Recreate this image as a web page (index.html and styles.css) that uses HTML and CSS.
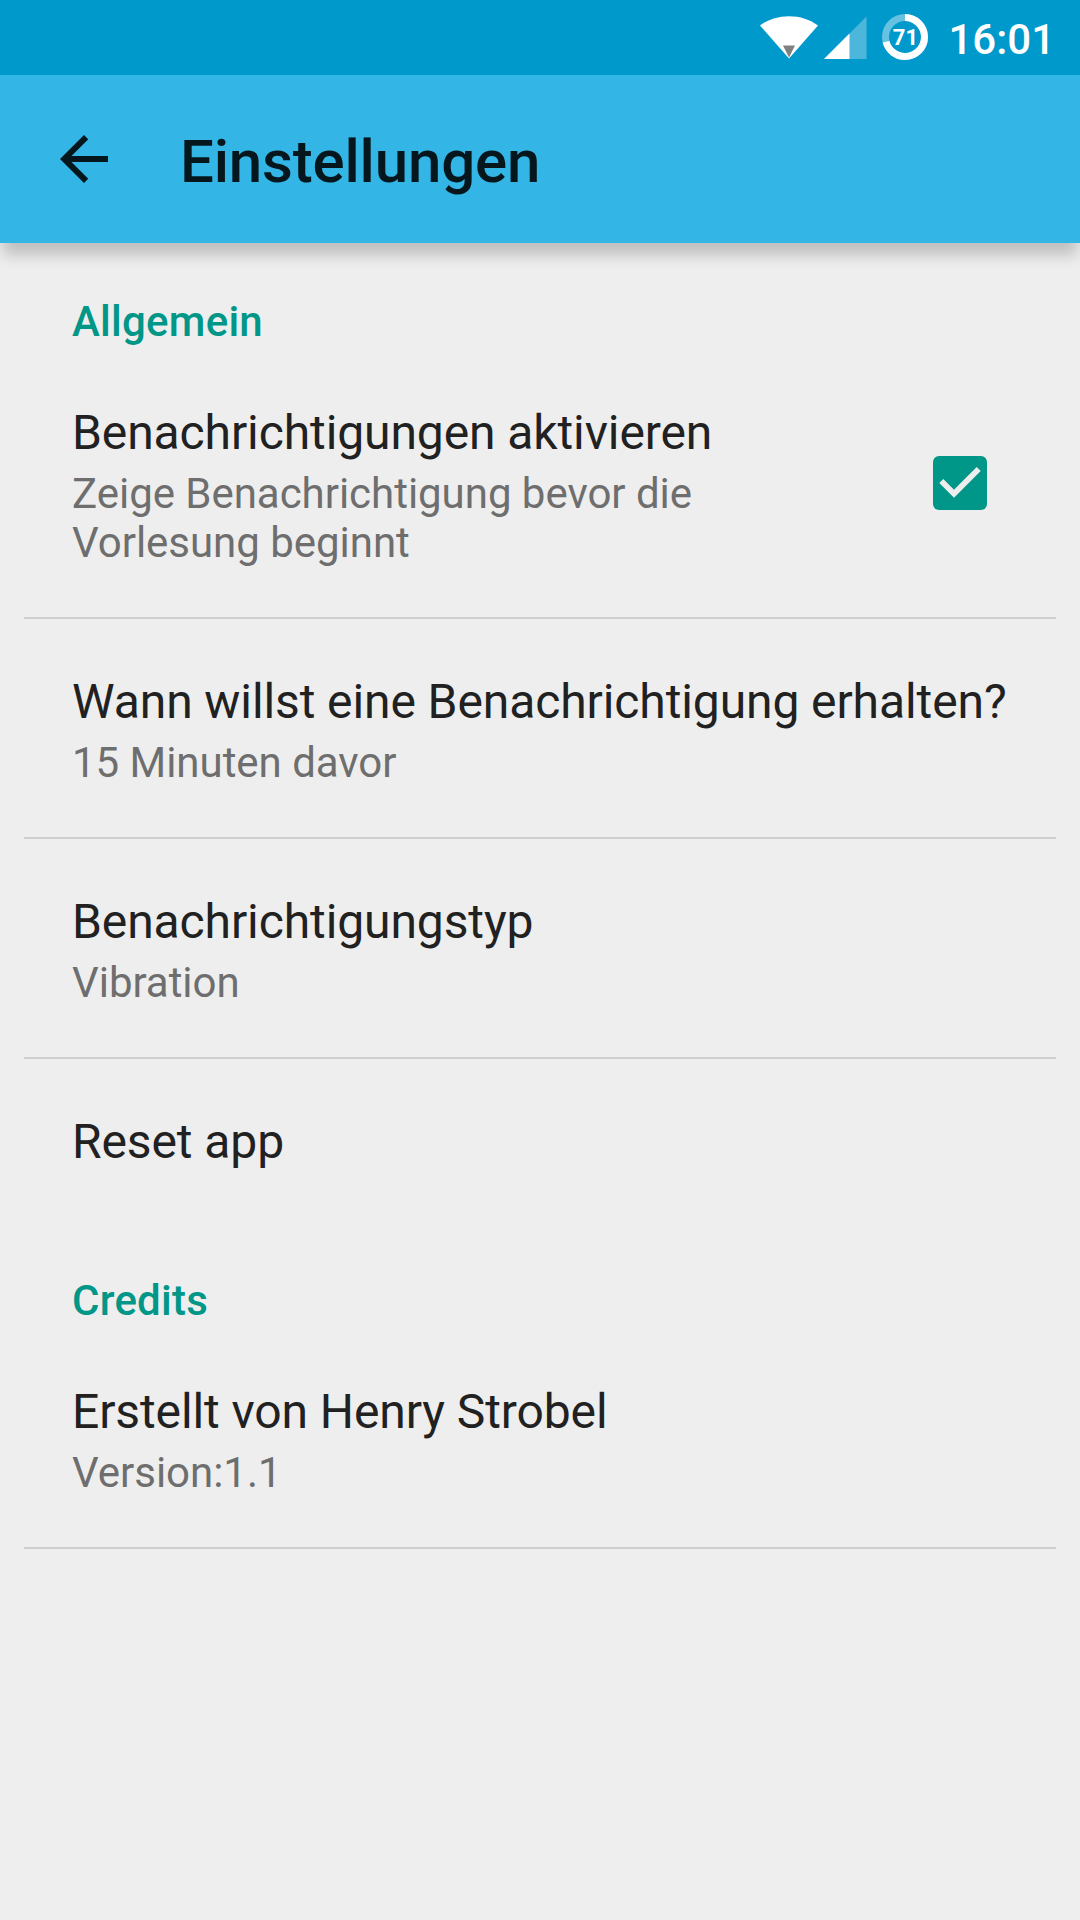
FILE: index.html
```html
<!DOCTYPE html>
<html lang="de">
<head>
<meta charset="utf-8">
<title>Einstellungen</title>
<link rel="stylesheet" href="styles.css">
</head>
<body>
<div class="status-bar">
  <svg class="wifi" width="58" height="43" viewBox="0 0 58 43" aria-hidden="true">
    <path d="M0 9.500C8 3.500 18 .2 29 .2s21 3.300 29 9.300L29 42.500z" fill="#fff"/>
    <path d="M23 29.500h12L29 41.500z" fill="#808080"/>
  </svg>
  <svg class="signal" width="43" height="43" viewBox="0 0 43 43" aria-hidden="true">
    <path d="M0 43L42.500 .5V43z" fill="#fff" fill-opacity=".3"/>
    <path d="M0 43L25.500 17.500V43z" fill="#fff"/>
  </svg>
  <div class="battery">
    <svg width="46" height="46" viewBox="0 0 46 46" aria-hidden="true">
      <circle cx="23" cy="23" r="19.500" fill="none" stroke="#fff" stroke-opacity=".4" stroke-width="7"/>
      <circle cx="23" cy="23" r="19.500" fill="none" stroke="#fff" stroke-width="7" pathLength="100" stroke-dasharray="71 29" transform="rotate(-90 23 23)"/>
    </svg>
    <span class="battery-level">71</span>
  </div>
  <span class="clock">16:01</span>
</div>
<header class="toolbar">
  <svg class="back" width="72" height="72" viewBox="0 0 24 24" aria-hidden="true">
    <path d="M20 11H7.830l5.590-5.590L12 4l-8 8 8 8 1.410-1.410L7.830 13H20v-2z"/>
  </svg>
  <h1 class="title">Einstellungen</h1>
</header>
<main class="settings">
  <h2 class="category">Allgemein</h2>
  <div class="item divided">
    <div class="item-text">
      <div class="item-title">Benachrichtigungen aktivieren</div>
      <div class="item-summary">Zeige Benachrichtigung bevor die Vorlesung beginnt</div>
    </div>
    <svg class="checkbox" width="54" height="54" viewBox="0 0 54 54" role="img" aria-label="Aktiviert">
      <rect width="54" height="54" rx="6" fill="#009688"/>
      <path d="M8.300 25L21 37.700L45.700 13" fill="none" stroke="#eee" stroke-width="5.700"/>
    </svg>
  </div>
  <div class="item divided">
    <div class="item-text">
      <div class="item-title">Wann willst eine Benachrichtigung erhalten?</div>
      <div class="item-summary">15 Minuten davor</div>
    </div>
  </div>
  <div class="item divided">
    <div class="item-text">
      <div class="item-title">Benachrichtigungstyp</div>
      <div class="item-summary">Vibration</div>
    </div>
  </div>
  <div class="item item-single">
    <div class="item-text">
      <div class="item-title">Reset app</div>
    </div>
  </div>
  <h2 class="category">Credits</h2>
  <div class="item divided">
    <div class="item-text">
      <div class="item-title">Erstellt von Henry Strobel</div>
      <div class="item-summary">Version:1.1</div>
    </div>
  </div>
</main>
</body>
</html>
```
FILE: styles.css
```css
* {
  box-sizing: border-box;
}

body {
  margin: 0;
  min-height: 1920px;
  background: #eee;
  color: #212121;
  font-family: Roboto, sans-serif;
}

.status-bar {
  display: flex;
  justify-content: flex-end;
  align-items: flex-start;
  height: 75px;
  padding: 14px 25px 0 0;
  background: #0099cc;
  color: #fff;
}

.wifi {
  margin: 2px 6px 0 0;
}

.signal {
  margin: 2px 15px 0 0;
}

.battery {
  display: grid;
  place-items: center;
  width: 46px;
  height: 46px;
  margin-right: 20px;
}

.battery > * {
  grid-area: 1 / 1;
}

.battery-level {
  margin-top: 1px;
  font-size: 22px;
  font-weight: 700;
  line-height: 24px;
}

.clock {
  margin-top: 1px;
  font-size: 42px;
  font-weight: 500;
  line-height: 49px;
}

.toolbar {
  position: relative;
  display: flex;
  align-items: center;
  height: 168px;
  padding-left: 48px;
  background: #33b5e5;
  box-shadow: 0 15px 14px -3px rgba(0, 0, 0, 0.2);
}

.back {
  fill: #05171d;
}

.title {
  margin: 5px 0 0 60px;
  color: #05171d;
  font-size: 60px;
  font-weight: 500;
  letter-spacing: -0.18px;
  line-height: 70px;
}

.settings {
  padding: 0 24px;
}

.category {
  margin: 0;
  padding: 54px 48px 4px;
  color: #009688;
  font-size: 42px;
  font-weight: 500;
  letter-spacing: 0.25px;
  line-height: 49px;
}

.item {
  display: flex;
  align-items: center;
  padding: 55px 0 50px 48px;
}

.divided {
  border-bottom: 2px solid #cfcfcf;
}

.item-single {
  padding-bottom: 52px;
}

.item-text {
  flex: 1;
}

.item-title {
  font-size: 48px;
  letter-spacing: -0.1px;
  line-height: 56px;
  white-space: nowrap;
}

.item-summary {
  margin-top: 8px;
  color: #6e6e6e;
  font-size: 42px;
  letter-spacing: -0.03px;
  line-height: 49px;
}

.checkbox {
  flex: none;
  margin: -7px 69px 0 69px;
}
```
